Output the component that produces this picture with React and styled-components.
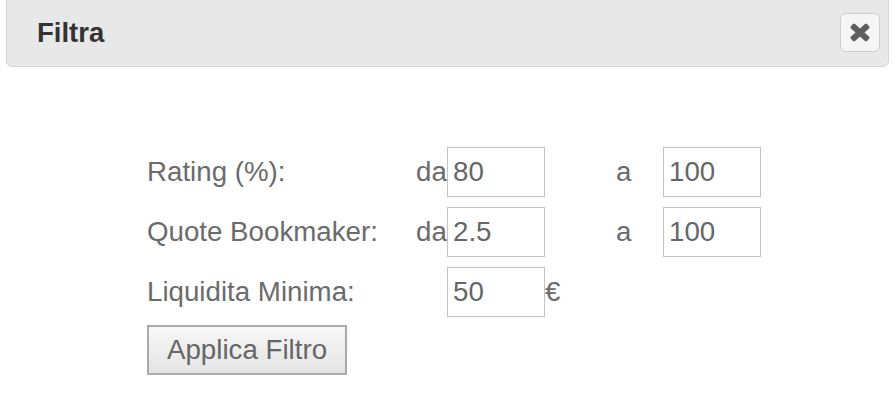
import React from "react";
import styled, { createGlobalStyle } from "styled-components";

const Global = createGlobalStyle`
  html, body { margin: 0; padding: 0; background: #fff; }
  body { font-family: "Liberation Sans", Arial, Helvetica, sans-serif; }
`;

const Page = styled.div`
  width: 896px;
  height: 400px;
  background: #fff;
`;

const Header = styled.div`
  margin: -1px 7px 0 6px;
  height: 68px;
  box-sizing: border-box;
  background: #e8e8e8;
  border: 1px solid #d6d6d6;
  border-radius: 0 0 6px 6px;
  display: flex;
  align-items: center;
  justify-content: space-between;
  padding: 0 8px 0 30px;
`;

const Title = styled.h2`
  margin: 0;
  font-family: "Liberation Sans", Arial, sans-serif;
  font-size: 27.5px;
  font-weight: bold;
  color: #333;
`;

const CloseButton = styled.button`
  width: 40px;
  height: 39px;
  box-sizing: border-box;
  padding: 0;
  margin-bottom: 2px;
  border: 1.5px solid #cdcdcd;
  border-radius: 6px;
  background: #f5f5f5;
  display: flex;
  align-items: center;
  justify-content: center;
  cursor: pointer;
`;

const Form = styled.div`
  margin: 80px 0 0 147px;
`;

const Grid = styled.div`
  display: grid;
  grid-template-columns: 268px 32px 98px 70px 48px 98px;
  grid-auto-rows: 50px;
  row-gap: 10px;
  align-items: center;
`;

const Text = styled.span`
  font-family: "Liberation Sans", Arial, sans-serif;
  font-size: 27.7px;
  color: #6b6b6b;
  white-space: nowrap;
  padding-left: ${(p) => p.$indent || 0}px;
`;

const Field = styled.input`
  width: 98px;
  height: 50px;
  box-sizing: border-box;
  margin: 0;
  border: 1px solid #c4c4c4;
  padding: 0 0 0 5px;
  font-family: "Liberation Sans", Arial, sans-serif;
  font-size: 27.7px;
  color: #666;
  background: #fff;
  outline: none;
`;

const Apply = styled.button`
  margin-top: 8px;
  height: 50px;
  box-sizing: border-box;
  padding: 0 18px;
  border: 2px solid #aaaaaa;
  background: linear-gradient(#f7f7f7, #e4e4e4);
  font-family: "Liberation Sans", Arial, sans-serif;
  font-size: 27.7px;
  color: #666;
  cursor: pointer;
`;

const Spacer = styled.span``;

function CrossIcon() {
  return (
    <svg width="20" height="19" viewBox="0 0 20 19" aria-hidden="true">
      <g fill="#5e5e5e">
        <rect x="-1" y="6.5" width="22" height="6" rx="2" transform="rotate(42 10 9.5)" />
        <rect x="-1" y="6.5" width="22" height="6" rx="2" transform="rotate(-42 10 9.5)" />
      </g>
    </svg>
  );
}

export default function App() {
  return (
    <Page>
      <Global />
      <Header>
        <Title>Filtra</Title>
        <CloseButton aria-label="Chiudi">
          <CrossIcon />
        </CloseButton>
      </Header>
      <Form>
        <Grid>
          <Text>Rating (%):</Text>
          <Text $indent={1}>da</Text>
          <Field defaultValue="80" />
          <Spacer />
          <Text $indent={1}>a</Text>
          <Field defaultValue="100" />

          <Text>Quote Bookmaker:</Text>
          <Text $indent={1}>da</Text>
          <Field defaultValue="2.5" />
          <Spacer />
          <Text $indent={1}>a</Text>
          <Field defaultValue="100" />

          <Text>Liquidita Minima:</Text>
          <Spacer />
          <Field defaultValue="50" />
          <Text>€</Text>
        </Grid>
        <Apply>Applica Filtro</Apply>
      </Form>
    </Page>
  );
}
